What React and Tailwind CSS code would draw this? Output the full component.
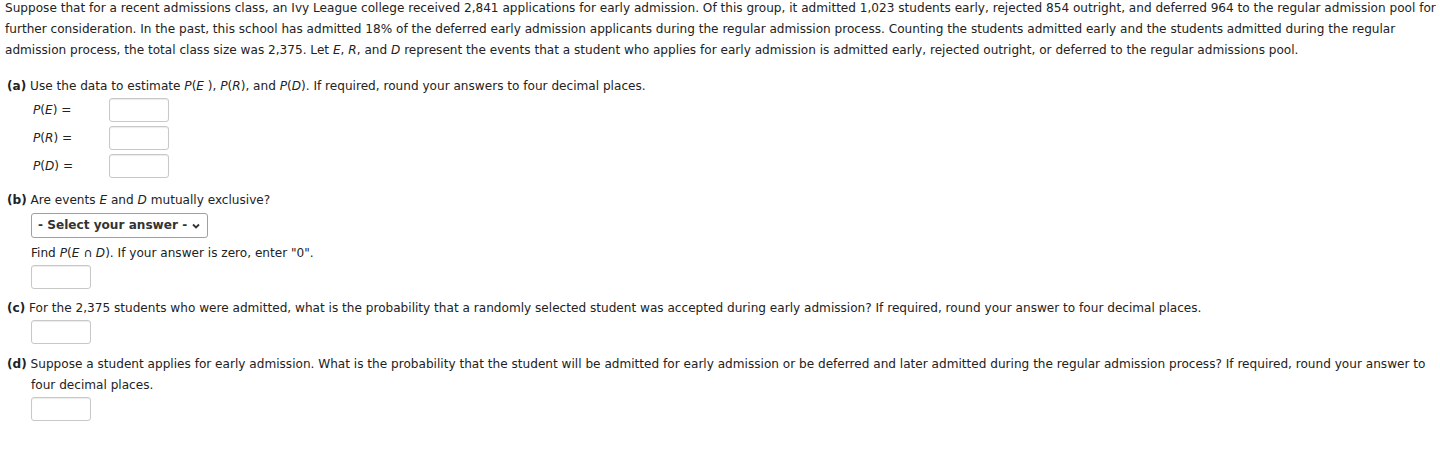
import React from 'react';

const Box = ({ className = '' }) => (
  <input
    type="text"
    className={`block h-[24px] w-[60px] rounded-[3px] border border-[#c8c8c8] bg-white shadow-[inset_0_1px_1px_rgba(0,0,0,0.08)] ${className}`}
  />
);

const I = ({ children }) => <i className="italic">{children}</i>;

const App = () => {
  const probs = ['E', 'R', 'D'];

  return (
    <div className="min-h-[463px] bg-white px-[5px] text-[12.1px] leading-[21px] text-[#222] [font-family:'DejaVu_Sans',Verdana,sans-serif]">
      <p className="-mr-[5px] -mt-[2px]">
        Suppose that for a recent admissions class, an Ivy League college received 2,841 applications for early admission. Of this group, it admitted 1,023 students early, rejected 854 outright, and deferred 964 to the regular admission pool for further consideration. In the past, this school has admitted 18% of the deferred early admission applicants during the regular admission process. Counting the students admitted early and the students admitted during the regular admission process, the total class size was 2,375. Let <I>E</I>, <I>R</I>, and <I>D</I> represent the events that a student who applies for early admission is admitted early, rejected outright, or deferred to the regular admissions pool.
      </p>

      <div className="mt-[15px] pl-[2px]">
        <p>
          <b>(a)</b> Use the data to estimate <I>P</I>(<I>E</I> ), <I>P</I>(<I>R</I>), and <I>P</I>(<I>D</I>). If required, round your answers to four decimal places.
        </p>
        <div className="mt-[1px] flex flex-col gap-[4px] pl-[26px]">
          {probs.map((ev) => (
            <div key={ev} className="flex items-center">
              <span className="w-[76px]">
                <I>P</I>(<I>{ev}</I>) =
              </span>
              <Box />
            </div>
          ))}
        </div>
      </div>

      <div className="mt-[12px] pl-[2px]">
        <p>
          <b>(b)</b> Are events <I>E</I> and <I>D</I> mutually exclusive?
        </p>
        <div className="pl-[24px]">
          <div className="mt-[2px] flex h-[25px] w-[177px] items-center justify-between whitespace-nowrap rounded-[3px] border border-[#a0a0a0] bg-white pl-[6px] pr-[6px] font-bold text-[#333]">
            <span>- Select your answer -</span>
            <svg width="10" height="10" viewBox="0 0 10 10" fill="none" stroke="#333" strokeWidth="1.8">
              <path d="M2 3.5 L5 6.5 L8 3.5" />
            </svg>
          </div>
          <p className="mt-[5px]">
            Find <I>P</I>(<I>E</I> ∩ <I>D</I>). If your answer is zero, enter "0".
          </p>
          <Box className="mt-[1px]" />
        </div>
      </div>

      <div className="mt-[9px] pl-[2px]">
        <p>
          <b>(c)</b> For the 2,375 students who were admitted, what is the probability that a randomly selected student was accepted during early admission? If required, round your answer to four decimal places.
        </p>
        <div className="pl-[24px]">
          <Box className="mt-[1px]" />
        </div>
      </div>

      <div className="mt-[10px] pl-[2px]">
        <p className="pl-[24px] -indent-[24px]">
          <b>(d)</b> Suppose a student applies for early admission. What is the probability that the student will be admitted for early admission or be deferred and later admitted during the regular admission process? If required, round your answer to four decimal places.
        </p>
        <div className="pl-[24px]">
          <Box className="mt-[1px]" />
        </div>
      </div>
    </div>
  );
};

export default App;
